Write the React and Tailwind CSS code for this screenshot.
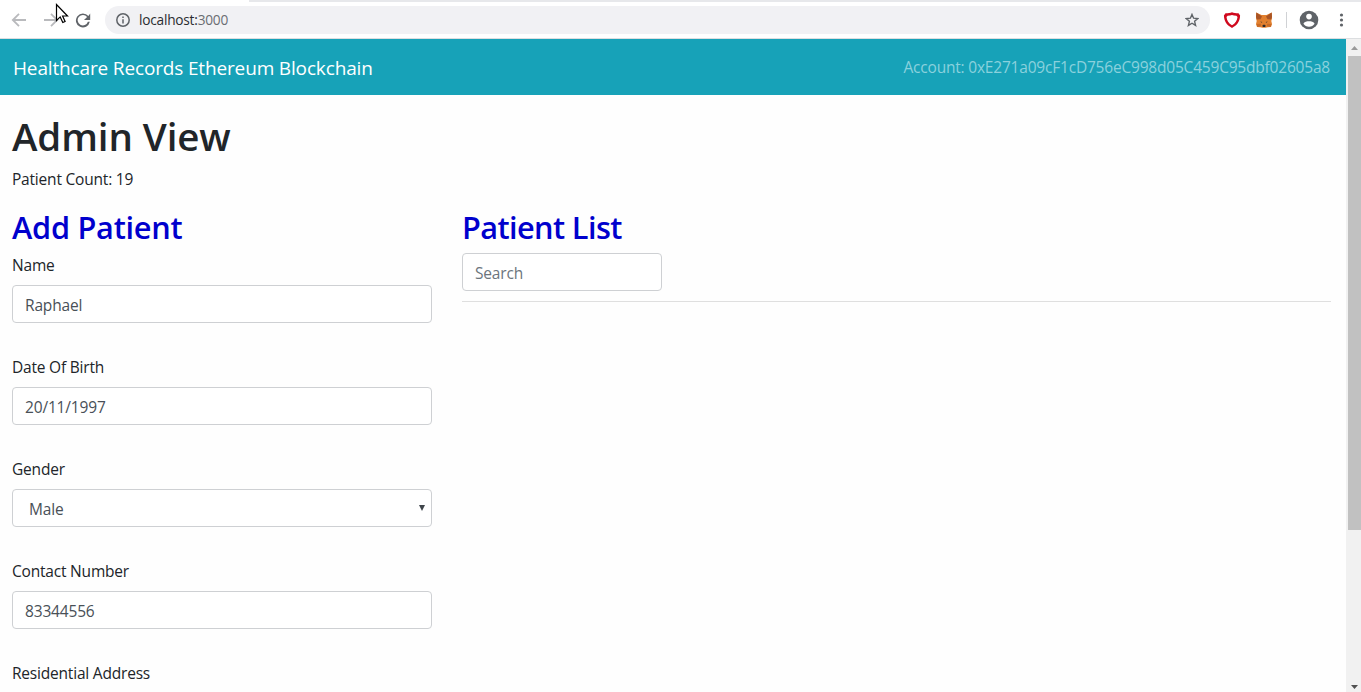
import React from 'react';

function BrowserBar() {
  return (
    <header className="relative flex h-[39px] shrink-0 items-center border-b border-[#dcdee0] bg-white pt-[2px]">
      <div className="absolute left-[249px] right-0 top-0 h-[2px] bg-[#e7e8eb]" />
      <svg className="ml-[11px] size-4 shrink-0" viewBox="0 0 16 16" fill="none" stroke="#b9babd" strokeWidth="1.8">
        <path d="M15 8H2.2M8 1.8 1.8 8 8 14.2" />
      </svg>
      <svg className="ml-[16px] size-4 shrink-0" viewBox="0 0 16 16" fill="none" stroke="#b9babd" strokeWidth="1.8">
        <path d="M1 8h12.8M8 1.8 14.2 8 8 14.2" />
      </svg>
      <svg className="ml-[16px] size-4 shrink-0" viewBox="0 0 16 16">
        <path d="M13.4 4.1A7 7 0 1 0 14.8 9.8h-1.9A5.25 5.25 0 1 1 12.1 5L9 8h6.2V1.6z" fill="#5f6368" />
      </svg>
      <div className="ml-[14px] flex h-7 w-[1105px] items-center rounded-full bg-[#f1f1f4] pl-[11px] pr-[11px]">
        <svg className="size-[14px]" viewBox="0 0 14 14" fill="none" stroke="#5f6368" strokeWidth="1.5">
          <circle cx="7" cy="7" r="6.2" />
          <path d="M7 6.2v4.2M7 3.5v1.5" />
        </svg>
        <span className="ml-[9px] whitespace-nowrap text-[13.7px] leading-5 tracking-[-0.23px] text-[#2b2d31]">
          localhost:<span className="text-[#6a6d72]">3000</span>
        </span>
        <svg className="ml-auto size-[14px]" viewBox="0 0 14 14" fill="none" stroke="#5f6368" strokeWidth="1.4">
          <path d="M7 1.4 8.6 5.2l4.2.4-3.2 2.7 1 4.1L7 10.2l-3.6 2.2 1-4.1L1.2 5.6l4.2-.4z" />
        </svg>
      </div>
      <svg className="ml-[13px] h-4 w-[18px] shrink-0" viewBox="0 0 18 16">
        <path d="M2.500 1.300C5.200 1.300 7.300.900 9 .2c1.700.7 3.800 1.100 6.500 1.100L17.100 3.600C17 9.400 14 13.600 9 15.900 4 13.600 1 9.400.9 3.600z" fill="#d0091e" />
        <path d="M4.600 3.700C6.400 3.700 7.800 3.400 9 2.900c1.200.5 2.600.8 4.400.8l1.100 1.200c-.3 3.600-2.200 6.400-5.500 8.300-3.300-1.900-5.200-4.700-5.500-8.300z" fill="#fff" />
      </svg>
      <svg className="ml-[14px] h-4 w-[18px] shrink-0" viewBox="0 0 18 16">
        <path d="M1.300.5 6.500 3h5L16.700.5l.3 5.500-.7 3 .7 3-1 3-3.200.3-2.300.5h-3L5.200 15.300 2 15l-1-3 .7-3L1 6z" fill="#e2802f" />
        <path d="M1.300.5 7 4.600 5.500 7.300 1.800 7.600 1 5zM16.700.5 11 4.600l1.500 2.700 3.700.3.800-2.600z" fill="#a95425" />
        <path d="m7.500 13.200.8-.5h1.400l.8.500-.2 1.700H7.700z" fill="#2d2a2c" />
        <path d="m5.200 9.500 2.100.4-.6.8zM12.800 9.500l-2.100.4.6.8z" fill="#3b3433" />
        <path d="m1.500 12 4.200-.2.500 2.500-3.900.6zM16.500 12l-4.200-.2-.5 2.500 3.900.6z" fill="#c96a25" />
      </svg>
      <div className="ml-[13px] h-4 w-px bg-[#d0d2d5]" />
      <svg className="ml-[12px] size-5 shrink-0" viewBox="0 0 20 20">
        <circle cx="10" cy="10" r="9.300" fill="#5f6368" />
        <circle cx="10" cy="6.600" r="2.800" fill="#fff" />
        <path d="M4.400 13.700c.7-1.900 3.600-2.500 5.600-2.500s4.900.6 5.600 2.500A6.700 6.700 0 0 1 10 16.700a6.700 6.700 0 0 1-5.600-3z" fill="#fff" />
      </svg>
      <svg className="ml-[20px] h-4 w-[5px] shrink-0" viewBox="0 0 5 16" fill="#5f6368">
        <circle cx="2.500" cy="3" r="1.600" />
        <circle cx="2.500" cy="8" r="1.600" />
        <circle cx="2.500" cy="13" r="1.600" />
      </svg>
      <svg className="absolute left-[55px] top-[3px] h-[21px] w-[14px]" viewBox="0 0 14 21">
        <path d="M1.500 1.500v16l3.700-3.600 2.600 5.600 2.300-1-2.500-5.500h4.900z" fill="#fff" stroke="#000" strokeWidth="1.200" />
      </svg>
    </header>
  );
}

const box = 'flex h-[38px] items-center rounded-[4px] border border-[#ced0d3] bg-white px-3 pt-[2px] text-[15.500px] leading-6 tracking-[-0.17px] text-[#495057]';

function Field({ label, children }) {
  return (
    <div className="mb-8">
      <div className="mb-2 h-6 whitespace-nowrap text-[15.500px] leading-6 tracking-[-0.2px]">{label}</div>
      {children}
    </div>
  );
}

function Scrollbar() {
  return (
    <div className="flex w-[15px] shrink-0 flex-col bg-[#f1f1f1] pl-[2px]">
      <div className="flex h-[17px] items-center justify-center">
        <svg className="h-1 w-[7px]" viewBox="0 0 7 4"><path d="M0 4 3.500 0 7 4z" fill="#9a9a9a" /></svg>
      </div>
      <div className="h-[474px] bg-[#c1c1c1]" />
      <div className="mt-auto flex h-[11px] items-center justify-center">
        <svg className="h-1 w-[7px]" viewBox="0 0 7 4"><path d="M0 0h7L3.500 4z" fill="#505050" /></svg>
      </div>
    </div>
  );
}

export default function App() {
  return (
    <div className="flex h-[692px] w-[1361px] flex-col overflow-hidden bg-white font-['Open_Sans','Noto_Sans',sans-serif] text-[#212529]">
      <BrowserBar />
      <div className="flex min-h-0 flex-1">
        <div className="min-w-0 flex-1 overflow-hidden bg-[#fefefe]">
          <nav className="flex h-14 items-center justify-between bg-[#17a2b8] pl-[13px] pr-4">
            <span className="whitespace-nowrap pt-[2px] text-[19px] leading-[30px] tracking-[-0.15px] text-white">Healthcare Records Ethereum Blockchain</span>
            <span className="whitespace-nowrap text-[15.500px] leading-6 tracking-[-0.2px] text-[#8ad1dd]">Account: 0xE271a09cF1cD756eC998d05C459C95dbf02605a8</span>
          </nav>
          <main className="px-3 pt-4">
            <h1 className="mb-2 h-12 whitespace-nowrap pt-px text-[38.500px] font-semibold leading-[48px] tracking-[-0.1px]">Admin View</h1>
            <p className="mb-4 h-6 text-[15.500px] leading-6 tracking-[-0.2px]">Patient Count: 19</p>
            <div className="flex gap-[30px]">
              <section className="w-[420px] shrink-0">
                <h2 className="mb-2 h-[38px] whitespace-nowrap pt-px text-[30.700px] font-semibold leading-[38px] tracking-[-0.25px] text-[#0000cd]">Add Patient</h2>
                <Field label="Name"><div className={box}>Raphael</div></Field>
                <Field label="Date Of Birth"><div className={box}>20/11/1997</div></Field>
                <Field label="Gender">
                  <div className={`${box} justify-between`}>
                    <span className="pl-1">Male</span>
                    <svg className="-mr-[6px] -mt-[3px] h-[6px] w-[6px]" viewBox="0 0 6 6"><path d="M0 0h6L3 6z" fill="#3f454b" /></svg>
                  </div>
                </Field>
                <Field label="Contact Number"><div className={box}>83344556</div></Field>
                <Field label="Residential Address"><div className={box} /></Field>
              </section>
              <section className="w-[869px] shrink-0">
                <h2 className="mb-2 h-[38px] whitespace-nowrap pt-px text-[30.700px] font-semibold leading-[38px] tracking-[-0.600px] text-[#0000cd]">Patient List</h2>
                <div className={`${box} w-[200px]`}><span className="text-[#6c757d]">Search</span></div>
                <hr className="mt-[10px] border-t border-[#dfdfdf]" />
              </section>
            </div>
          </main>
        </div>
        <Scrollbar />
      </div>
    </div>
  );
}
